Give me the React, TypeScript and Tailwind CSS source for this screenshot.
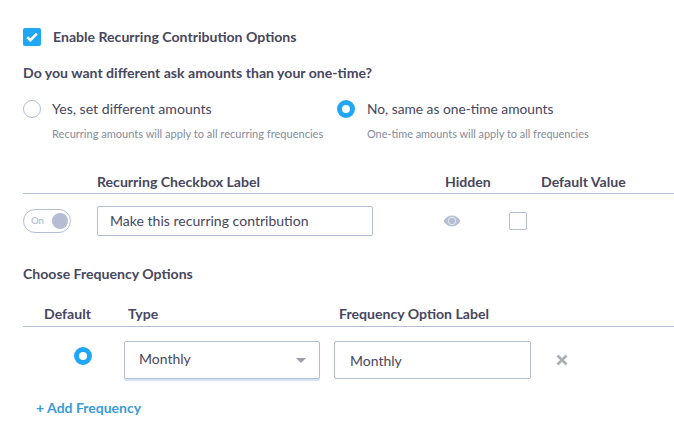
const heading = "text-[14.1px] font-bold leading-[18px] text-[#474760]";

function Radio({ checked }: { checked?: boolean }) {
  return checked ? (
    <span className="block h-[18px] w-[18px] shrink-0 rounded-full border-[5px] border-[#1fa7f5] bg-white" />
  ) : (
    <span className="block h-[18px] w-[18px] shrink-0 rounded-full border border-[#b4bdd3] bg-white" />
  );
}

function RadioOption({ title, hint, checked, className, titleSize, hintSize }: { title: string; hint: string; checked?: boolean; className: string; titleSize: string; hintSize: string }) {
  return (
    <div className={`flex ${className}`}>
      <Radio checked={checked} />
      <div>
        <div className={`${titleSize} leading-[18px] text-[#474760]`}>{title}</div>
        <div className={`mt-[9px] ${hintSize} leading-[14px] text-[#838c9e]`}>{hint}</div>
      </div>
    </div>
  );
}

export default function App() {
  return (
    <div className="h-[425px] w-[674px] overflow-hidden bg-white pl-[23px] pt-[28px] font-['Lato',sans-serif]">
      <div className="flex items-center gap-[12px]">
        <span className="flex h-[18px] w-[18px] items-center justify-center rounded-[2px] bg-[#1fa7f5]">
          <svg width="12" height="10" viewBox="0 0 12 10" fill="none" stroke="white" strokeWidth="2.6">
            <path d="M1.2 5.2 4.4 8.2 10.8 1.6" />
          </svg>
        </span>
        <span className={heading}>Enable Recurring Contribution Options</span>
      </div>

      <div className={`mt-[18px] ${heading}`}>Do you want different ask amounts than your one-time?</div>

      <div className="mt-[18px] flex">
        <RadioOption className="w-[314px] gap-[11px]" titleSize="text-[14.1px]" hintSize="text-[11.05px]" title="Yes, set different amounts" hint="Recurring amounts will apply to all recurring frequencies" />
        <RadioOption checked className="gap-[12px]" titleSize="text-[13.75px]" hintSize="text-[10.9px]" title="No, same as one-time amounts" hint="One-time amounts will apply to all frequencies" />
      </div>

      <div className="mt-[32px] flex h-[21px] items-start border-b border-[#b4bdd3]">
        <span className={`ml-[74px] w-[348px] ${heading}`}>Recurring Checkbox Label</span>
        <span className={`w-[96px] ${heading}`}>Hidden</span>
        <span className={heading}>Default Value</span>
      </div>

      <div className="mt-[12px] flex items-center">
        <div className="flex h-[24px] w-[48px] items-center justify-between rounded-full border border-[#b4bdd3] pl-[7px] pr-[2px]">
          <span className="text-[9.5px] font-bold text-[#bcc4d8]">On</span>
          <span className="h-[16px] w-[16px] rounded-full bg-[#b4bdd3]" />
        </div>
        <div className="ml-[26px] flex h-[30px] w-[276px] items-center rounded-[2px] border border-[#b4bdd3] pl-[12px] text-[14.05px] text-[#474760]">
          Make this recurring contribution
        </div>
        <svg className="ml-[70px]" width="18" height="12" viewBox="0 0 18 12">
          <path d="M0.5 6C3 2.2 5.8 0.5 9 0.5S15 2.2 17.5 6C15 9.8 12.2 11.5 9 11.5S3 9.8 0.5 6Z" fill="#b4bdd3" />
          <circle cx="9" cy="6" r="4.2" fill="#dfe3ed" />
          <circle cx="9" cy="6" r="3" fill="#b4bdd3" />
        </svg>
        <span className="ml-[48px] h-[18px] w-[18px] rounded-[2px] border border-[#b4bdd3] bg-white" />
      </div>

      <div className={`mt-[29px] ${heading}`}>Choose Frequency Options</div>

      <div className="mt-[22px] flex h-[22px] items-start border-b border-[#b4bdd3]">
        <span className={`ml-[21px] w-[84px] ${heading}`}>Default</span>
        <span className={`w-[211px] ${heading}`}>Type</span>
        <span className={heading}>Frequency Option Label</span>
      </div>

      <div className="mt-[14px] flex items-start">
        <div className="ml-[51px] mt-[6px]">
          <Radio checked />
        </div>
        <div className="ml-[32px] flex h-[38px] w-[196px] items-center justify-between rounded-[2px] border border-[#b4bdd3] pb-[3px] pl-[14px] pr-[13px] text-[14px] text-[#474760] shadow-[0_2px_0_#d3e4f3]">
          Monthly
          <span className="mt-[4px] h-0 w-0 border-x-[5.5px] border-t-[5px] border-x-transparent border-t-[#9a9fae]" />
        </div>
        <div className="ml-[14px] flex h-[38px] w-[197px] items-center rounded-[2px] border border-[#b4bdd3] pl-[15px] text-[14px] text-[#474760]">
          Monthly
        </div>
        <svg className="ml-[25px] mt-[13px]" width="12" height="12" viewBox="0 0 12 12" stroke="#a9adb8" strokeWidth="2.6">
          <path d="M1.5 1.5 10.5 10.5M10.5 1.5 1.5 10.5" />
        </svg>
      </div>

      <div className="ml-[13px] mt-[20px] text-[14px] font-bold leading-[18px] text-[#3a9bd9]">+ Add Frequency</div>
    </div>
  );
}
